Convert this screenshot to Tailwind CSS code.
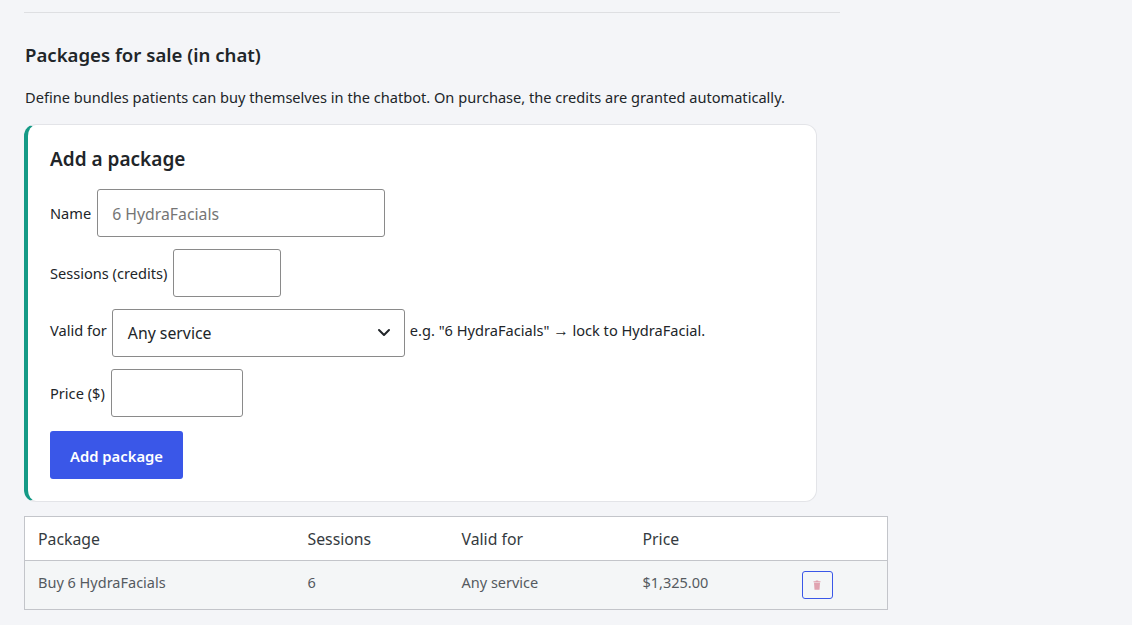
<!DOCTYPE html>
<html lang="en">
<head>
<meta charset="utf-8">
<title>Packages</title>
<script src="https://cdn.jsdelivr.net/npm/@tailwindcss/browser@4"></script>
</head>
<body class="bg-[#f4f5f8] text-[#212529] font-['Noto_Sans',sans-serif] overflow-hidden">
<div class="h-[625px] pl-6 pt-3 overflow-hidden">
    <hr class="w-[816px] border-t border-[#dedfe2]">

    <!-- Packages section -->
    <h2 class="mt-[30px] h-6 pl-px text-[18.6px] leading-6 font-semibold">Packages for sale (in chat)</h2>
    <p class="mt-[20px] h-5 pl-px text-[14.6px] leading-5">Define bundles patients can buy themselves in the chatbot. On purchase, the credits are granted automatically.</p>

    <!-- Add form -->
    <div class="mt-[17px] w-[793px] h-[378px] bg-white border border-[#e3e4e8] border-l-4 border-l-[#159a86] rounded-[12px] pl-[22px] pt-[20px]">
        <h3 class="h-7 text-[19px] leading-7 font-semibold">Add a package</h3>

        <div class="mt-[16px] flex items-center gap-[6px] h-12 text-[14.6px]">
            <label class="pt-[2px]">Name</label>
            <input type="text" placeholder="6 HydraFacials" class="w-[288px] h-12 px-[14px] pt-[2px] bg-white border border-[#8a8a8a] rounded-[3px] text-[15.8px] placeholder-[#757575]">
        </div>

        <div class="mt-3 flex items-center gap-[6px] h-12 text-[14.6px]">
            <label class="pt-[2px]">Sessions (credits)</label>
            <input type="text" class="w-[108px] h-12 px-[14px] bg-white border border-[#8a8a8a] rounded-[3px]">
        </div>

        <div class="mt-3 flex items-center gap-[5px] h-12 text-[14.6px]">
            <label class="pb-[4px]">Valid for</label>
            <div class="relative w-[293px] h-12 flex items-center pl-[15px] pt-[2px] bg-white border border-[#8a8a8a] rounded-[3px] text-[15.8px]">
                Any service
                <svg class="absolute right-[13px] top-[18px] w-[14px] h-[10px]" viewBox="0 0 14 10" fill="none" stroke="#212529" stroke-width="2" stroke-linecap="round" stroke-linejoin="round"><path d="M2 2l5 5 5-5"/></svg>
            </div>
            <span class="pb-[4px]">e.g. "6 HydraFacials" <span class="font-['Liberation_Sans',sans-serif] text-[15.5px] leading-none">→</span> lock to HydraFacial.</span>
        </div>

        <div class="mt-3 flex items-center gap-[6px] h-12 text-[14.6px]">
            <label class="pt-[2px]">Price ($)</label>
            <input type="text" class="w-[132px] h-12 px-[14px] bg-white border border-[#8a8a8a] rounded-[3px]">
        </div>

        <button class="mt-[14px] w-[133px] h-12 pt-[2px] bg-[#3a57e8] text-white text-[14.8px] font-semibold rounded-[3px]">Add package</button>
    </div>

    <!-- Packages table -->
    <table class="mt-[14px] w-[864px] table-fixed border-collapse border border-[#c3c5ca] text-[14.5px]">
        <thead>
            <tr class="h-11 bg-white border-b border-[#c3c5ca] text-left text-[#343a40] text-[15.8px]">
                <th class="w-[270px] pl-[13px] pt-[2px] font-normal">Package</th>
                <th class="w-[154px] pl-[13px] pt-[2px] font-normal">Sessions</th>
                <th class="w-[181px] pl-[13px] pt-[2px] font-normal">Valid for</th>
                <th class="w-[159px] pl-[13px] pt-[2px] font-normal">Price</th>
                <th class="font-normal"></th>
            </tr>
        </thead>
        <tbody>
            <tr class="h-[49px] bg-[#f4f6f7] text-[#555a5f]">
                <td class="pl-[13px] pb-1">Buy 6 HydraFacials</td>
                <td class="pl-[13px] pb-1">6</td>
                <td class="pl-[13px] pb-1">Any service</td>
                <td class="pl-[13px] pb-1">$1,325.00</td>
                <td class="pl-[13px] pb-[1px]">
                    <button class="w-[31px] h-7 flex items-center justify-center border border-[#3a57e8] rounded-[3px]" aria-label="Delete">
                        <svg class="w-[8px] h-[10px]" viewBox="0 0 8 10" fill="#e0a3b0"><path d="M0.5 1.2h2l.4-.7h2.2l.4.7h2v1H0.5zM1 2.8h6l-.5 7h-5z"/></svg>
                    </button>
                </td>
            </tr>
        </tbody>
    </table>
</div>
</body>
</html>
